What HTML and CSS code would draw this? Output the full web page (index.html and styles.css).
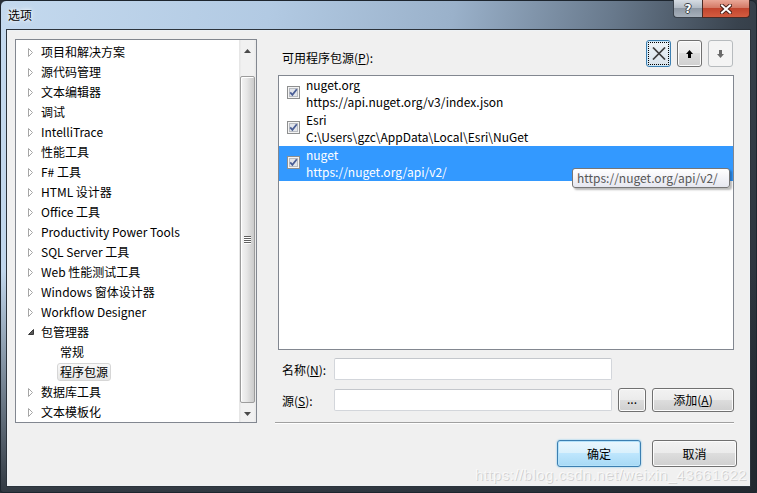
FILE: index.html
```html
<!DOCTYPE html>
<html>
<head>
<meta charset="utf-8">
<title>选项</title>
<link rel="stylesheet" href="styles.css">
</head>
<body>
<div class="window">
  <div class="titlebar">
    <span class="title">选项</span>
    <div class="caption-btns">
      <div class="cap help"><span class="q">?</span></div>
      <div class="cap close">
        <svg width="12" height="10" viewBox="0 0 12 10"><path d="M2 1.5 L10 8.5 M10 1.5 L2 8.5" stroke="#4a2018" stroke-width="4" stroke-linecap="square"/><path d="M2 1.5 L10 8.5 M10 1.5 L2 8.5" stroke="#fff" stroke-width="2" stroke-linecap="square"/></svg>
      </div>
    </div>
  </div>
  <div class="client">
    <div class="main">
      <div class="tree">
        <div class="tree-items">
          <div class="node"><span class="tw"><svg width="6" height="9" viewBox="0 0 6 9"><path d="M0.5 0.5 L4.5 4.5 L0.5 8.5 Z" fill="#fff" stroke="#a6a6a6"/></svg></span><span>项目和解决方案</span></div>
          <div class="node"><span class="tw"><svg width="6" height="9" viewBox="0 0 6 9"><path d="M0.5 0.5 L4.5 4.5 L0.5 8.5 Z" fill="#fff" stroke="#a6a6a6"/></svg></span><span>源代码管理</span></div>
          <div class="node"><span class="tw"><svg width="6" height="9" viewBox="0 0 6 9"><path d="M0.5 0.5 L4.5 4.5 L0.5 8.5 Z" fill="#fff" stroke="#a6a6a6"/></svg></span><span>文本编辑器</span></div>
          <div class="node"><span class="tw"><svg width="6" height="9" viewBox="0 0 6 9"><path d="M0.5 0.5 L4.5 4.5 L0.5 8.5 Z" fill="#fff" stroke="#a6a6a6"/></svg></span><span>调试</span></div>
          <div class="node"><span class="tw"><svg width="6" height="9" viewBox="0 0 6 9"><path d="M0.5 0.5 L4.5 4.5 L0.5 8.5 Z" fill="#fff" stroke="#a6a6a6"/></svg></span><span>IntelliTrace</span></div>
          <div class="node"><span class="tw"><svg width="6" height="9" viewBox="0 0 6 9"><path d="M0.5 0.5 L4.5 4.5 L0.5 8.5 Z" fill="#fff" stroke="#a6a6a6"/></svg></span><span>性能工具</span></div>
          <div class="node"><span class="tw"><svg width="6" height="9" viewBox="0 0 6 9"><path d="M0.5 0.5 L4.5 4.5 L0.5 8.5 Z" fill="#fff" stroke="#a6a6a6"/></svg></span><span>F# 工具</span></div>
          <div class="node"><span class="tw"><svg width="6" height="9" viewBox="0 0 6 9"><path d="M0.5 0.5 L4.5 4.5 L0.5 8.5 Z" fill="#fff" stroke="#a6a6a6"/></svg></span><span>HTML 设计器</span></div>
          <div class="node"><span class="tw"><svg width="6" height="9" viewBox="0 0 6 9"><path d="M0.5 0.5 L4.5 4.5 L0.5 8.5 Z" fill="#fff" stroke="#a6a6a6"/></svg></span><span>Office 工具</span></div>
          <div class="node"><span class="tw"><svg width="6" height="9" viewBox="0 0 6 9"><path d="M0.5 0.5 L4.5 4.5 L0.5 8.5 Z" fill="#fff" stroke="#a6a6a6"/></svg></span><span>Productivity Power Tools</span></div>
          <div class="node"><span class="tw"><svg width="6" height="9" viewBox="0 0 6 9"><path d="M0.5 0.5 L4.5 4.5 L0.5 8.5 Z" fill="#fff" stroke="#a6a6a6"/></svg></span><span>SQL Server 工具</span></div>
          <div class="node"><span class="tw"><svg width="6" height="9" viewBox="0 0 6 9"><path d="M0.5 0.5 L4.5 4.5 L0.5 8.5 Z" fill="#fff" stroke="#a6a6a6"/></svg></span><span>Web 性能测试工具</span></div>
          <div class="node"><span class="tw"><svg width="6" height="9" viewBox="0 0 6 9"><path d="M0.5 0.5 L4.5 4.5 L0.5 8.5 Z" fill="#fff" stroke="#a6a6a6"/></svg></span><span>Windows 窗体设计器</span></div>
          <div class="node"><span class="tw"><svg width="6" height="9" viewBox="0 0 6 9"><path d="M0.5 0.5 L4.5 4.5 L0.5 8.5 Z" fill="#fff" stroke="#a6a6a6"/></svg></span><span>Workflow Designer</span></div>
          <div class="node"><span class="tw"><svg width="6" height="6" viewBox="0 0 6 6"><path d="M5.5 0.5 V5.5 H0.5 Z" fill="#5a5a5a" stroke="#3a3a3a"/></svg></span><span>包管理器</span></div>
          <div class="node child"><span class="sel-box">常规</span></div>
          <div class="node child"><span class="sel-box on">程序包源</span></div>
          <div class="node"><span class="tw"><svg width="6" height="9" viewBox="0 0 6 9"><path d="M0.5 0.5 L4.5 4.5 L0.5 8.5 Z" fill="#fff" stroke="#a6a6a6"/></svg></span><span>数据库工具</span></div>
          <div class="node"><span class="tw"><svg width="6" height="9" viewBox="0 0 6 9"><path d="M0.5 0.5 L4.5 4.5 L0.5 8.5 Z" fill="#fff" stroke="#a6a6a6"/></svg></span><span>文本模板化</span></div>
        </div>
        <div class="vscroll">
          <div class="sb-btn up"><svg width="7" height="4" viewBox="0 0 7 4"><path d="M0 4 L3.5 0 L7 4 Z" fill="#4a4a4a"/></svg></div>
          <div class="sb-track">
            <div class="thumb">
              <svg width="7" height="8" viewBox="0 0 7 8"><g fill="#5f5f5f"><rect x="0" y="0" width="7" height="1"/><rect x="0" y="2" width="7" height="1"/><rect x="0" y="4" width="7" height="1"/><rect x="0" y="6" width="7" height="1"/></g><g fill="#ffffff"><rect x="0" y="1" width="7" height="1"/><rect x="0" y="3" width="7" height="1"/><rect x="0" y="5" width="7" height="1"/><rect x="0" y="7" width="7" height="1"/></g></svg>
            </div>
          </div>
          <div class="sb-btn down"><svg width="7" height="4" viewBox="0 0 7 4"><path d="M0 0 L3.5 4 L7 0 Z" fill="#4a4a4a"/></svg></div>
        </div>
      </div>

      <div class="panel">
        <div class="panel-head">
          <span class="head-label">可用程序包源(<u>P</u>):</span>
          <div class="tools">
            <div class="tbtn focus"><svg width="14" height="13" viewBox="0 0 14 13"><path d="M1 0.5 L13 12.5 M13 0.5 L1 12.5" stroke="#3c3c3c" stroke-width="1.7"/></svg></div>
            <div class="tbtn"><svg width="7" height="8" viewBox="0 0 7 8"><path d="M3.5 0 L7 4 L5 4 L5 8 L2 8 L2 4 L0 4 Z" fill="#000"/></svg></div>
            <div class="tbtn disabled"><svg width="7" height="8" viewBox="0 0 7 8"><path d="M2 0 L5 0 L5 4 L7 4 L3.5 8 L0 4 L2 4 Z" fill="#6a6a6a"/></svg></div>
          </div>
        </div>
        <div class="sources">
          <div class="src">
            <svg class="cb" width="13" height="13" viewBox="0 0 13 13"><rect x="0.5" y="0.5" width="12" height="12" fill="#f4f4f4" stroke="#8e8f8f"/><rect x="2.5" y="2.5" width="8" height="8" fill="#e2e5ea" stroke="#b9bcc2"/><path d="M3.2 6.3 L5.4 8.8 L9.8 3.2" fill="none" stroke="#4a5e96" stroke-width="1.8"/></svg>
            <div class="src-text"><div>nuget.org</div><div>https://api.nuget.org/v3/index.json</div></div>
          </div>
          <div class="src">
            <svg class="cb" width="13" height="13" viewBox="0 0 13 13"><rect x="0.5" y="0.5" width="12" height="12" fill="#f4f4f4" stroke="#8e8f8f"/><rect x="2.5" y="2.5" width="8" height="8" fill="#e2e5ea" stroke="#b9bcc2"/><path d="M3.2 6.3 L5.4 8.8 L9.8 3.2" fill="none" stroke="#4a5e96" stroke-width="1.8"/></svg>
            <div class="src-text"><div>Esri</div><div>C:\Users\gzc\AppData\Local\Esri\NuGet</div></div>
          </div>
          <div class="src sel">
            <svg class="cb" width="13" height="13" viewBox="0 0 13 13"><rect x="0.5" y="0.5" width="12" height="12" fill="#f4f4f4" stroke="#8e8f8f"/><rect x="2.5" y="2.5" width="8" height="8" fill="#e2e5ea" stroke="#b9bcc2"/><path d="M3.2 6.3 L5.4 8.8 L9.8 3.2" fill="none" stroke="#4a5e96" stroke-width="1.8"/></svg>
            <div class="src-text"><div>nuget</div><div>https://nuget.org/api/v2/</div></div>
          </div>
          <div class="tooltip">https://nuget.org/api/v2/</div>
        </div>
        <div class="field">
          <span class="lbl">名称(<u>N</u>):</span>
          <div class="input"></div>
        </div>
        <div class="field tall">
          <span class="lbl">源(<u>S</u>):</span>
          <div class="input"></div>
          <div class="btn dots">...</div>
          <div class="btn add">添加(<u>A</u>)</div>
        </div>
        <div class="sep"></div>
      </div>
    </div>
    <div class="footer">
      <div class="btn default ok">确定</div>
      <div class="btn cancel">取消</div>
    </div>
  </div>
  <div class="watermark">https://blog.csdn.net/weixin_43661622</div>
</div>
</body>
</html>
```

FILE: styles.css
```css
* { box-sizing: border-box; }
html, body { margin: 0; padding: 0; }
body {
  width: 757px;
  height: 493px;
  overflow: hidden;
  background: #2a3038;
  font-family: "Noto Sans CJK SC", "Noto Sans", sans-serif;
  font-size: 12px;
  color: #000;
}
u { text-decoration: underline; text-underline-offset: 1px; }

.window {
  position: relative;
  width: 757px;
  height: 493px;
  border: 1px solid #1d252e;
  border-radius: 6px 6px 3px 3px;
  padding: 0 6px 6px 6px;
  display: flex;
  flex-direction: column;
  background:
    linear-gradient(to bottom, rgba(30,36,42,0) 0%, rgba(30,36,42,0) 55%, rgba(34,40,47,0.9) 100%),
    linear-gradient(100deg, #c4d9ee 0%, #b2cae3 32%, #9ab1ca 54%, #68798c 73%, #39434e 88%, #272d35 100%);
}

.titlebar {
  height: 29px;
  display: flex;
  align-items: flex-start;
}
.title {
  margin-left: 1px;
  margin-top: 5px;
  line-height: 17px;
  font-size: 12px;
  color: #000;
  text-shadow: 0 0 6px #fff, 0 0 3px #fff;
}
.caption-btns {
  margin-left: auto;
  margin-top: -1px;
  display: flex;
}
.cap {
  height: 18px;
  display: flex;
  align-items: center;
  justify-content: center;
  border: 1px solid #3a424c;
  border-top: none;
}
.help {
  width: 29px;
  border-radius: 0 0 0 4px;
  border-right: none;
  background: linear-gradient(#d6dce3 0%, #b3bcc6 45%, #8f99a5 50%, #a7b0bb 100%);
}
.help .q {
  font-family: "DejaVu Sans", sans-serif;
  font-weight: bold;
  font-size: 12px;
  line-height: 12px;
  color: #fff;
  text-shadow: 1px 0 0 #3a3f46, -1px 0 0 #3a3f46, 0 1px 0 #3a3f46, 0 -1px 0 #3a3f46;
}
.close {
  width: 48px;
  border-radius: 0 0 4px 0;
  border-color: #4a2a24;
  background: linear-gradient(#eaa898 0%, #d47a66 45%, #c2452e 50%, #d35c40 100%);
}

.client {
  flex: 1;
  background: #f0f0f0;
  border: 1px solid #eef2f5;
  box-shadow: 0 0 0 1px #2c333b;
  display: flex;
  flex-direction: column;
}

.main {
  display: flex;
  gap: 21px;
  padding: 8px 15px 0 7px;
}

/* Tree */
.tree {
  width: 242px;
  height: 384px;
  border: 1px solid #828790;
  background: #fff;
  display: flex;
}
.tree-items {
  flex: 1;
  padding-top: 2px;
  overflow: hidden;
}
.node {
  height: 20px;
  display: flex;
  align-items: center;
  padding-left: 12px;
  white-space: nowrap;
  line-height: 16px;
}
.tw {
  width: 13px;
  display: flex;
  align-items: center;
}
.node.child { padding-left: 41px; }
.sel-box {
  height: 18px;
  display: flex;
  align-items: center;
  padding: 0 2px;
  border: 1px solid transparent;
  border-radius: 3px;
}
.sel-box.on {
  border-color: #d6d6d6;
  background: linear-gradient(#f9f9f9, #e6e6e6);
}

.vscroll {
  width: 17px;
  display: flex;
  flex-direction: column;
  background: linear-gradient(to right, #e3e3e3 0%, #f1f1f1 15%, #f1f1f1 85%, #e8e8e8 100%);
}
.sb-btn {
  height: 17px;
  display: flex;
  align-items: center;
  justify-content: center;
}
.sb-btn.up { padding-top: 4px; }
.sb-track {
  flex: 1;
  padding: 19px 1px 2px 1px;
  display: flex;
}
.thumb {
  flex: 1;
  border: 1px solid #9c9c9c;
  border-radius: 2px;
  background: linear-gradient(to right, #f4f4f4 0%, #e6e6e6 45%, #d6d6d6 75%, #cccccc 100%);
  box-shadow: inset 1px 1px 0 #fff;
  display: flex;
  align-items: center;
  justify-content: center;
}

/* Right panel */
.panel {
  flex: 1;
  display: flex;
  flex-direction: column;
}
.panel-head {
  height: 29px;
  display: flex;
}
.head-label {
  margin-top: 10px;
  padding-left: 4px;
  line-height: 17px;
}
.tools {
  margin-left: auto;
  margin-right: 1px;
  padding-top: 1px;
  display: flex;
  gap: 6px;
}
.tbtn {
  width: 25px;
  height: 27px;
  border: 1px solid #707070;
  border-radius: 3px;
  background: linear-gradient(#f2f2f2 0%, #ebebeb 49%, #dddddd 50%, #cfcfcf 100%);
  box-shadow: inset 0 0 0 1px #fcfcfc;
  display: flex;
  align-items: center;
  justify-content: center;
}
.tbtn.focus {
  border-color: #3c7fb1;
  background: linear-gradient(#eef4f8 0%, #e3ebf1 50%, #d8e2ea 100%);
  box-shadow: inset 0 0 0 1px #cfe8f8;
  outline: 1px dotted #000;
  outline-offset: -3px;
}
.tbtn.disabled {
  border-color: #b7bbbe;
  background: #f4f4f4;
  box-shadow: none;
}

.sources {
  position: relative;
  height: 275px;
  margin-top: 7px;
  border: 1px solid #828790;
  background: #fff;
}
.src {
  height: 35px;
  display: flex;
  align-items: flex-start;
  padding-left: 8px;
}
.cb { margin-top: 10px; flex: none; }
.src-text {
  margin-left: 6px;
  padding-top: 0;
  line-height: 17px;
  white-space: nowrap;
}
.src.sel {
  background: #3399ff;
  color: #fff;
}
.tooltip {
  position: absolute;
  left: 293px;
  top: 92px;
  width: 158px;
  height: 20px;
  padding: 0 4px;
  line-height: 18px;
  color: #575757;
  border: 1px solid #767676;
  border-radius: 3px;
  background: linear-gradient(#ffffff 0%, #e6e7f0 100%);
  box-shadow: 2px 2px 2px rgba(0,0,0,0.28);
  white-space: nowrap;
}

.field {
  display: flex;
  align-items: center;
  height: 22px;
  margin-top: 8px;
}
.field.tall { height: 24px; }
.lbl {
  width: 56px;
  padding-left: 4px;
  line-height: 17px;
  white-space: nowrap;
}
.input {
  width: 278px;
  height: 22px;
  background: #fff;
  border: 1px solid #d3d6db;
  border-top-color: #c4c7cc;
  border-radius: 2px;
}

.btn {
  height: 24px;
  border: 1px solid #707070;
  border-radius: 3px;
  background: linear-gradient(#f2f2f2 0%, #ebebeb 49%, #dddddd 50%, #cfcfcf 100%);
  box-shadow: inset 0 0 0 1px #fcfcfc;
  display: flex;
  align-items: center;
  justify-content: center;
  line-height: 16px;
  white-space: nowrap;
}
.dots { width: 28px; margin-left: 6px; padding-bottom: 2px; }
.add { width: 82px; margin-left: 6px; }

.sep {
  margin-top: 10px;
  margin-left: -3px;
  height: 2px;
  border-top: 1px solid #a0a0a0;
  border-bottom: 1px solid #ffffff;
}

.footer {
  display: flex;
  justify-content: flex-end;
  gap: 11px;
  padding: 16px 12px 0 0;
}
.ok { width: 84px; height: 27px; }
.cancel { width: 85px; height: 27px; }
.btn.default {
  border-color: #3c7fb1;
  background: linear-gradient(#eaf6fd 0%, #d9f0fc 49%, #bee6fd 50%, #a7d9f5 100%);
  box-shadow: inset 0 0 0 1px #b5e2fa, 0 0 2px #6cc0ef;
}

.watermark {
  position: absolute;
  left: 474px;
  top: 465px;
  font-family: "Liberation Sans", Arial, sans-serif;
  font-size: 15px;
  letter-spacing: 0.45px;
  line-height: 18px;
  color: rgba(255,255,255,0.62);
  text-shadow: 1px 1px 0 rgba(0,0,0,0.15);
  white-space: nowrap;
}
```
